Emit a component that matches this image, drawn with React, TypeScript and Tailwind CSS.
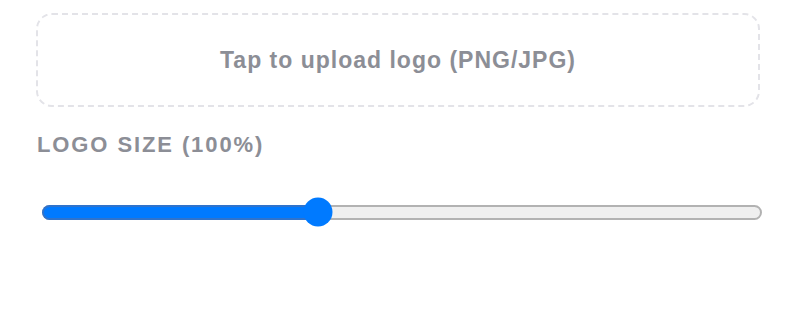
import React from "react";

export default function App() {
  const pct = 0.379;
  return (
    <div
      className="w-[796px] h-[320px] bg-white px-9 pt-[13px]"
      style={{ fontFamily: '"Liberation Sans", Arial, sans-serif' }}
    >
      <div className="h-[94px] rounded-2xl border-2 border-dashed border-[#e3e3e8] flex items-center justify-center">
        <span className="text-[23px] font-bold text-[#8c8e96] tracking-[1px] leading-[28px]">
          Tap to upload logo (PNG/JPG)
        </span>
      </div>
      <div className="mt-[25px] text-[22px] font-bold text-[#8c8e96] tracking-[1.9px] leading-[26px] pl-px">
        LOGO SIZE (100%)
      </div>
      <div className="mt-[38px] ml-[6px] mr-[-2px] relative h-[32px] flex items-center">
        <div className="relative w-full h-[15px] rounded-full bg-[#efefef] border-2 border-[#b2b2b2]">
          <div
            className="absolute left-[-2px] top-[-2px] bottom-[-2px] rounded-l-full bg-[#007aff] border-2 border-r-0 border-[#2f73cc]"
            style={{ width: `${pct * 720}px` }}
          />
        </div>
        <div
          className="absolute top-1/2 w-[29px] h-[29px] -translate-y-1/2 -translate-x-1/2 rounded-full bg-[#007aff]"
          style={{ left: `${14 + pct * (720 - 28)}px` }}
        />
      </div>
    </div>
  );
}
